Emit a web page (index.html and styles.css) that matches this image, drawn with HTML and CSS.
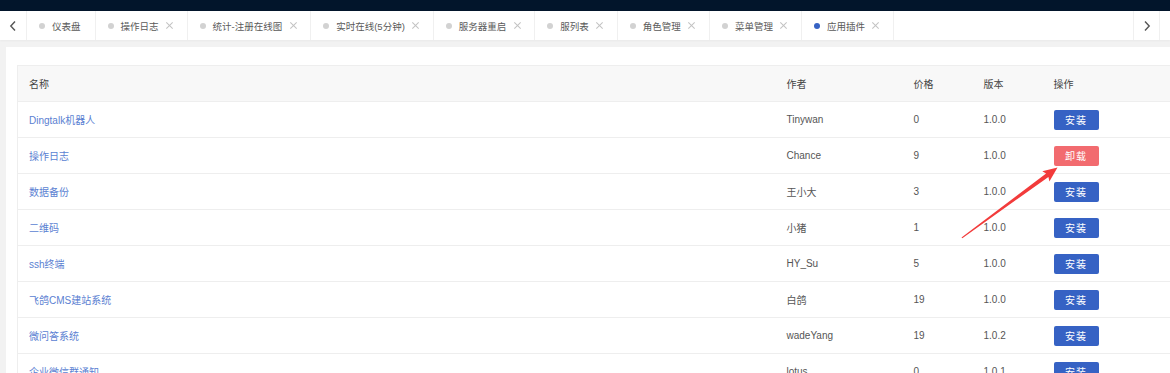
FILE: index.html
```html
<!DOCTYPE html>
<html lang="zh">
<head>
  <meta charset="UTF-8" />
  <title>应用插件</title>
  <link rel="stylesheet" href="styles.css">
</head>
<body>
  <div class="topbar"></div>

  <div class="tabbar">
    <div class="tab-nav">
      <svg width="8" height="12" viewBox="0 0 8 12"><path d="M6 1.5 1.8 6 6 10.5" fill="none" stroke="#555" stroke-width="1.4"/></svg>
    </div>
    <div class="tabs">
      <div class="tab"><i class="dot"></i>仪表盘</div>
      <div class="tab"><i class="dot"></i>操作日志<span class="close"></span></div>
      <div class="tab"><i class="dot"></i>统计-注册在线图<span class="close"></span></div>
      <div class="tab"><i class="dot"></i>实时在线(5分钟)<span class="close"></span></div>
      <div class="tab"><i class="dot"></i>服务器重启<span class="close"></span></div>
      <div class="tab"><i class="dot"></i>服列表<span class="close"></span></div>
      <div class="tab"><i class="dot"></i>角色管理<span class="close"></span></div>
      <div class="tab"><i class="dot"></i>菜单管理<span class="close"></span></div>
      <div class="tab active"><i class="dot"></i>应用插件<span class="close"></span></div>
    </div>
    <div class="tab-nav right">
      <svg width="8" height="12" viewBox="0 0 8 12"><path d="M2 1.5 6.2 6 2 10.5" fill="none" stroke="#555" stroke-width="1.4"/></svg>
    </div>
    <div class="tab-nav more"></div>
  </div>

  <div class="main">
    <div class="card">
      <table class="plugins">
        <colgroup>
          <col class="c-name"><col class="c-author"><col class="c-price"><col class="c-ver"><col>
        </colgroup>
        <thead>
          <tr><th>名称</th><th>作者</th><th>价格</th><th>版本</th><th>操作</th></tr>
        </thead>
        <tbody>
          <tr><td><a href="#">Dingtalk机器人</a></td><td>Tinywan</td><td>0</td><td>1.0.0</td><td><button class="btn">安装</button></td></tr>
          <tr><td><a href="#">操作日志</a></td><td>Chance</td><td>9</td><td>1.0.0</td><td><button class="btn danger">卸载</button></td></tr>
          <tr><td><a href="#">数据备份</a></td><td>王小大</td><td>3</td><td>1.0.0</td><td><button class="btn">安装</button></td></tr>
          <tr><td><a href="#">二维码</a></td><td>小猪</td><td>1</td><td>1.0.0</td><td><button class="btn">安装</button></td></tr>
          <tr><td><a href="#">ssh终端</a></td><td>HY_Su</td><td>5</td><td>1.0.0</td><td><button class="btn">安装</button></td></tr>
          <tr><td><a href="#">飞鸽CMS建站系统</a></td><td>白鸽</td><td>19</td><td>1.0.0</td><td><button class="btn">安装</button></td></tr>
          <tr><td><a href="#">微问答系统</a></td><td>wadeYang</td><td>19</td><td>1.0.2</td><td><button class="btn">安装</button></td></tr>
          <tr><td><a href="#">企业微信群通知</a></td><td>lotus</td><td>0</td><td>1.0.1</td><td><button class="btn">安装</button></td></tr>
        </tbody>
      </table>
    </div>
  </div>

  <!-- annotation arrow drawn over the screenshot -->
  <svg class="annot" width="1170" height="373" viewBox="0 0 1170 373">
    <polygon points="961.5,237.6 1046.1,173.6 1042.3,171.2 1057.5,167.6 1049.4,181.4 1048.4,176.9 962.3,238.2" fill="#f23b3b"/>
  </svg>
</body>
</html>
```

FILE: styles.css
```css
body {
  margin: 0;
  width: 1170px;
  height: 373px;
  overflow: hidden;
  position: relative;
  background-color: #f2f2f2;
  font-family: "Liberation Sans", "Noto Sans CJK SC", sans-serif;
  font-size: 10px;
  color: #555;
}

.topbar {
  height: 11px;
  background-color: #02152b;
}

.tabbar {
  display: flex;
  height: 29px;
  background-color: #fff;
  box-shadow: 0 1px 2px rgba(0, 0, 0, 0.04);
}

.tab-nav {
  width: 27px;
  flex: none;
  display: flex;
  align-items: center;
  justify-content: center;
  border-right: 1px solid #f0f0f0;
  box-sizing: border-box;
}

.tab-nav.right {
  border-left: 1px solid #f0f0f0;
}

.tab-nav.more {
  width: 10px;
  border-right: none;
}

.tabs {
  flex: 1;
  display: flex;
  overflow: hidden;
}

.tab {
  display: flex;
  align-items: center;
  padding: 0 12px;
  border-right: 1px solid #f0f0f0;
  color: #5a5a5a;
  white-space: nowrap;
  font-size: 9.5px;
}

.tab:first-child {
  padding-right: 14px;
}

.dot {
  width: 6px;
  height: 6px;
  border-radius: 50%;
  background-color: #d2d2d2;
  margin-right: 7px;
}

.tab.active .dot {
  background-color: #3662c4;
}

.close {
  position: relative;
  width: 8px;
  height: 8px;
  margin-left: 7px;
  margin-right: 1px;
}

.close::before,
.close::after {
  content: "";
  position: absolute;
  left: 3.5px;
  top: -0.5px;
  width: 1px;
  height: 9px;
  background-color: #c2c2c2;
  transform: rotate(45deg);
}

.close::after {
  transform: rotate(-45deg);
}

.main {
  padding: 7px 0 0 6px;
}

.card {
  background-color: #fff;
  padding: 18px 0 0 11px;
  height: 400px;
}

.plugins {
  width: 1153px;
  table-layout: fixed;
  border-collapse: collapse;
  border-left: 1px solid #eee;
}

.c-name { width: 758px; }
.c-author { width: 127px; }
.c-price { width: 70px; }
.c-ver { width: 70px; }

.plugins th,
.plugins td {
  height: 35px;
  padding: 0 0 0 11px;
  text-align: left;
  font-weight: normal;
  border-bottom: 1px solid #eee;
  white-space: nowrap;
}

.plugins th {
  background-color: #f8f8f8;
  border-top: 1px solid #eee;
  color: #444;
}

.plugins a {
  color: #5b7fd2;
  text-decoration: none;
}

.btn {
  width: 45px;
  height: 20px;
  padding: 0;
  border: none;
  border-radius: 2px;
  background-color: #3662c4;
  color: #fff;
  font-family: inherit;
  font-size: 10px;
  letter-spacing: 1px;
  vertical-align: middle;
}

.btn.danger {
  background-color: #f26b6f;
}

.annot {
  position: absolute;
  left: 0;
  top: 0;
  pointer-events: none;
}
```
